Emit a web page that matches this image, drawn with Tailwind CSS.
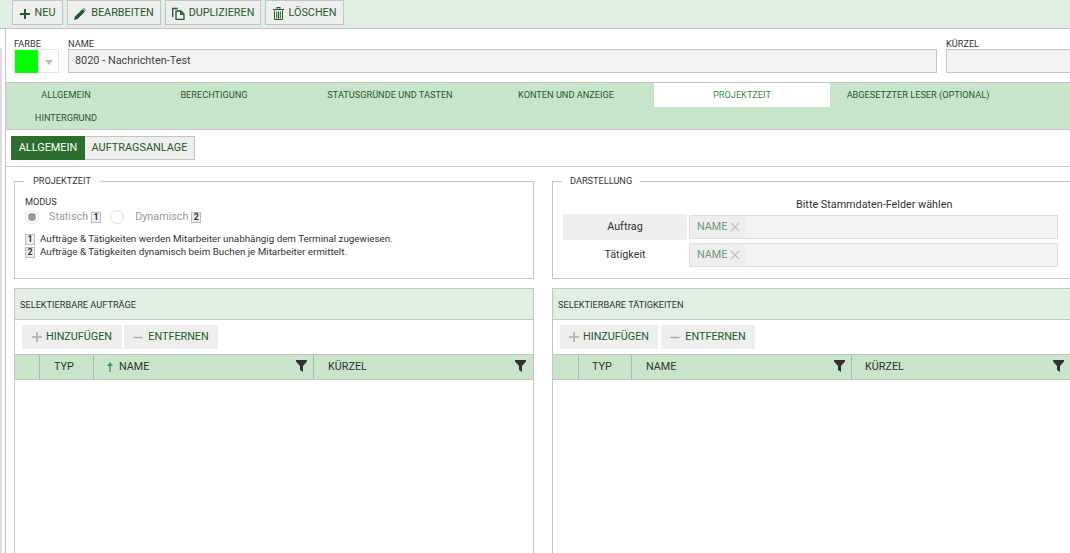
<!DOCTYPE html>
<html lang="en">
<head>
    <meta charset="UTF-8">
    <title>Projektzeit</title>
    <script src="https://cdn.jsdelivr.net/npm/@tailwindcss/browser@4"></script>
</head>
<body class="bg-white h-[553px] w-[1070px] overflow-hidden font-['Roboto',sans-serif] text-[#333] relative">
    <!-- left edge of the neighbouring panel -->
    <div class="absolute left-0 top-[48px] bottom-0 w-[2px] bg-[#ddd]"></div>

    <!-- toolbar -->
    <div class="h-[29px] bg-[#dfefe2] border-b border-[#c4c4c4] flex gap-[4px] pl-3 items-start">
        <button class="h-[25px] w-[51px] pt-[2px] bg-[#eee] border border-[#c4c4c4] flex items-center justify-center gap-[5px] text-[10.800px] text-[#1f5c28]">
            <svg class="w-[10px] h-[10px]" viewBox="0 0 10 10"><path d="M4 0h2v4h4v2H6v4H4V6H0V4h4z" fill="#1f5c28"/></svg>NEU
        </button>
        <button class="h-[25px] w-[94px] pt-[2px] bg-[#eee] border border-[#c4c4c4] flex items-center justify-center gap-[5px] text-[10.800px] text-[#1f5c28]">
            <svg class="w-[12px] h-[12px]" viewBox="0 0 12 12"><path d="M0 12l1-3.500L8.500 1l2.500 2.500L3.500 11zM9.200.4l.6-.4L12 2.200l-.4.600z" fill="#1f5c28"/></svg>BEARBEITEN
        </button>
        <button class="h-[25px] w-[96px] pt-[2px] bg-[#eee] border border-[#c4c4c4] flex items-center justify-center gap-[4px] text-[10.800px] text-[#1f5c28]">
            <svg class="w-[13px] h-[13px]" viewBox="0 0 13 13"><path d="M.7 10V1.500h5M4 12.300V4h5l3 3v5.300zM8.700 4v3.300H12" fill="none" stroke="#1f5c28" stroke-width="1.300"/></svg>DUPLIZIEREN
        </button>
        <button class="h-[25px] w-[79px] pt-[2px] bg-[#eee] border border-[#c4c4c4] flex items-center justify-center gap-[5px] text-[10.800px] text-[#1f5c28]">
            <svg class="w-[11px] h-[13px]" viewBox="0 0 11 13"><path d="M0 2h11v1H0zM4 0h3v1H4zM3.500 0h1v2h-1zM6.500 0h1v2h-1z" fill="#1f5c28"/><path d="M1.500 3.500v9h8v-9M3.700 4.500v7M5.500 4.500v7M7.300 4.500v7" fill="none" stroke="#1f5c28" stroke-width="1"/></svg>LÖSCHEN
        </button>
    </div>

    <div class="ml-[5px] border-l border-[#c4c4c4]">
        <!-- head fields -->
        <div class="h-[54px] flex pl-[8px] pt-[10px] border-b border-[#c4c4c4]">
            <div class="w-[45px] mr-[9px]">
                <div class="text-[9.200px] leading-[10px] h-[10px]">FARBE</div>
                <div class="h-[24px] w-[45px] border border-[#e2e2e2] flex items-center">
                    <div class="w-[23px] h-[23px] bg-[#00ff00]"></div>
                    <svg class="ml-[7px] w-[8px] h-[5px] mt-[2px]" viewBox="0 0 8 5"><path d="M0 0h8L4 5z" fill="#bbb"/></svg>
                </div>
            </div>
            <div class="w-[869px] mr-[9px]">
                <div class="text-[9.200px] leading-[10px] h-[10px]">NAME</div>
                <div class="h-[24px] bg-[#f3f3f3] border border-[#c8c8c8] pl-[6px] text-[10.900px] leading-[22px] text-[#444]">8020 - Nachrichten-Test</div>
            </div>
            <div class="flex-1">
                <div class="text-[9.200px] leading-[10px] h-[10px]">KÜRZEL</div>
                <div class="h-[24px] bg-[#f3f3f3] border border-[#c8c8c8] border-r-0"></div>
            </div>
        </div>

        <!-- tabs -->
        <div class="h-[47px] bg-[#c8e5ca] border-b border-[#c4c4c4] grid grid-cols-[120px_repeat(5,176px)] content-start text-[9.200px] text-[#1f5c28]">
            <div class="h-[24px] flex items-center justify-center">ALLGEMEIN</div>
            <div class="h-[24px] flex items-center justify-center">BERECHTIGUNG</div>
            <div class="h-[24px] flex items-center justify-center">STATUSGRÜNDE UND TASTEN</div>
            <div class="h-[24px] flex items-center justify-center">KONTEN UND ANZEIGE</div>
            <div class="h-[24px] flex items-center justify-center bg-white text-[#3a8a45]">PROJEKTZEIT</div>
            <div class="h-[24px] flex items-center justify-center whitespace-nowrap">ABGESETZTER LESER (OPTIONAL)</div>
            <div class="h-[22px] flex items-center justify-center">HINTERGRUND</div>
        </div>

        <!-- sub tabs -->
        <div class="h-[37px] border-b border-[#c4c4c4] flex pl-[5px] pt-[6px] text-[10.900px]">
            <div class="h-[24px] w-[74px] bg-[#2b6e30] text-white flex items-center justify-center">ALLGEMEIN</div>
            <div class="h-[24px] w-[110px] bg-[#eee] border border-[#c4c4c4] border-l-0 text-[#1f5c28] flex items-center justify-center">AUFTRAGSANLAGE</div>
        </div>

        <div class="grid grid-cols-[520px_1fr] gap-x-[18px] pl-[8px] pt-[14px]">
            <!-- projektzeit fieldset -->
            <fieldset class="border border-[#c4c4c4] h-[104px] pl-[10px] -mt-[6px] min-w-0">
                <legend class="text-[9.200px] leading-[12px] px-[9px] ml-[-1px]">PROJEKTZEIT</legend>
                <div class="text-[9.200px] leading-[11px] mt-[9px]">MODUS</div>
                <div class="flex items-center text-[10.800px] text-[#999] h-[18px] mt-[1px]">
                    <span class="w-[14px] h-[14px] rounded-full border border-[#ddd] flex items-center justify-center"><span class="w-[8px] h-[8px] rounded-full bg-[#999]"></span></span>
                    <span class="ml-[10px]">Statisch</span>
                    <span class="ml-[3px] w-[10px] h-[11px] border border-[#bbb] bg-[#eee] text-[9px] leading-[9px] text-[#333] font-bold text-center">1</span>
                    <span class="ml-[9px] w-[14px] h-[14px] rounded-full border border-[#ddd]"></span>
                    <span class="ml-[11px]">Dynamisch</span>
                    <span class="ml-[3px] w-[10px] h-[11px] border border-[#bbb] bg-[#eee] text-[9px] leading-[9px] text-[#333] font-bold text-center">2</span>
                </div>
                <div class="mt-[7px] flex items-center h-[13px] text-[9.800px] text-[#333]">
                    <span class="w-[10px] h-[11px] border border-[#bbb] bg-[#eee] text-[9px] leading-[9px] font-bold text-center mr-[5px]">1</span>Aufträge &amp; Tätigkeiten werden Mitarbeiter unabhängig dem Terminal zugewiesen.
                </div>
                <div class="flex items-center h-[13px] text-[9.800px] text-[#333]">
                    <span class="w-[10px] h-[11px] border border-[#bbb] bg-[#eee] text-[9px] leading-[9px] font-bold text-center mr-[5px]">2</span>Aufträge &amp; Tätigkeiten dynamisch beim Buchen je Mitarbeiter ermittelt.
                </div>
            </fieldset>

            <!-- darstellung fieldset -->
            <fieldset class="border border-[#c4c4c4] border-r-0 h-[104px] pl-[10px] -mt-[6px] min-w-0">
                <legend class="text-[9.200px] leading-[12px] px-[8px] ml-[-1px]">DARSTELLUNG</legend>
                <div class="text-[10.800px] ml-[233px] mt-[9px] mb-[1px] h-[17px] leading-[17px]">Bitte Stammdaten-Felder wählen</div>
                <div class="flex items-center h-[26px]">
                    <div class="w-[124px] h-[26px] bg-[#eee] text-[10.800px] flex items-center justify-center">Auftrag</div>
                    <div class="ml-[2px] w-[369px] h-[24px] bg-[#f3f3f3] border border-[#ddd] flex items-center">
                        <span class="bg-[#eee] h-full flex items-center pl-[7px] pr-[5px] gap-[3px] text-[10.800px] text-[#6b9a72]">NAME<svg class="w-[10px] h-[10px]" viewBox="0 0 10 10"><path d="M1 1l8 8M9 1L1 9" stroke="#c4c4c4" stroke-width="1.400"/></svg></span>
                    </div>
                </div>
                <div class="flex items-center h-[26px] mt-[2px]">
                    <div class="w-[124px] h-[26px] text-[10.800px] flex items-center justify-center">Tätigkeit</div>
                    <div class="ml-[2px] w-[369px] h-[24px] bg-[#f3f3f3] border border-[#ddd] flex items-center">
                        <span class="bg-[#eee] h-full flex items-center pl-[7px] pr-[5px] gap-[3px] text-[10.800px] text-[#6b9a72]">NAME<svg class="w-[10px] h-[10px]" viewBox="0 0 10 10"><path d="M1 1l8 8M9 1L1 9" stroke="#c4c4c4" stroke-width="1.400"/></svg></span>
                    </div>
                </div>
            </fieldset>

            <!-- auftraege -->
            <section class="border border-[#c4c4c4] border-b-0 mt-[9px] h-[280px]">
                <div class="h-[31px] pt-[2px] bg-[#dfefe2] border-b border-[#c4c4c4] text-[9.200px] flex items-center pl-[5px]">SELEKTIERBARE AUFTRÄGE</div>
                <div class="h-[34px] flex gap-[2px] pl-[7px] pt-[5px]">
                    <button class="h-[24px] w-[100px] bg-[#eee] flex items-center justify-center gap-[4px] text-[10.800px] text-[#1f5c28]"><svg class="w-[10px] h-[10px]" viewBox="0 0 9 9"><path d="M3.800 0h1.400v3.800H9v1.400H5.200V9H3.800V5.200H0V3.800h3.800z" fill="#aaa"/></svg>HINZUFÜGEN</button>
                    <button class="h-[24px] w-[94px] bg-[#eee] flex items-center justify-center gap-[5px] text-[10.800px] text-[#1f5c28]"><svg class="w-[10px] h-[9px]" viewBox="0 0 9 9"><path d="M0 3.800h9v1.400H0z" fill="#aaa"/></svg>ENTFERNEN</button>
                </div>
                <div class="h-[26px] bg-[#c8e5ca] border-y border-[#c4c4c4] flex items-center text-[10.800px]">
                    <div class="w-[25px] h-full border-r border-[#b5b5b5]"></div>
                    <div class="w-[54px] h-full border-r border-[#b5b5b5] flex items-center pl-[14px]">TYP</div>
                    <div class="w-[220px] h-full border-r border-[#b5b5b5] flex items-center pl-[13px] relative">
                        <svg class="w-[6px] h-[10px] mr-[6px]" viewBox="0 0 6 10"><path d="M3 0l3 4H3.700v6H2.300V4H0z" fill="#3a9a4a"/></svg>NAME
                        <svg class="absolute right-[6px] top-[5px] w-[11px] h-[12px]" viewBox="0 0 11 12"><path d="M0 0h11v1.500L7 6v6L4 10V6L0 1.500z" fill="#333"/></svg>
                    </div>
                    <div class="flex-1 h-full flex items-center pl-[14px] relative">KÜRZEL
                        <svg class="absolute right-[7px] top-[5px] w-[11px] h-[12px]" viewBox="0 0 11 12"><path d="M0 0h11v1.500L7 6v6L4 10V6L0 1.500z" fill="#333"/></svg>
                    </div>
                </div>
            </section>

            <!-- taetigkeiten -->
            <section class="border border-[#c4c4c4] border-b-0 border-r-0 mt-[9px] h-[280px]">
                <div class="h-[31px] pt-[2px] bg-[#dfefe2] border-b border-[#c4c4c4] text-[9.200px] flex items-center pl-[5px]">SELEKTIERBARE TÄTIGKEITEN</div>
                <div class="h-[34px] flex gap-[3px] pl-[7px] pt-[5px]">
                    <button class="h-[24px] w-[98px] bg-[#eee] flex items-center justify-center gap-[4px] text-[10.800px] text-[#1f5c28]"><svg class="w-[10px] h-[10px]" viewBox="0 0 9 9"><path d="M3.800 0h1.400v3.800H9v1.400H5.200V9H3.800V5.200H0V3.800h3.800z" fill="#aaa"/></svg>HINZUFÜGEN</button>
                    <button class="h-[24px] w-[94px] bg-[#eee] flex items-center justify-center gap-[5px] text-[10.800px] text-[#1f5c28]"><svg class="w-[10px] h-[9px]" viewBox="0 0 9 9"><path d="M0 3.800h9v1.400H0z" fill="#aaa"/></svg>ENTFERNEN</button>
                </div>
                <div class="h-[26px] bg-[#c8e5ca] border-y border-[#c4c4c4] flex items-center text-[10.800px]">
                    <div class="w-[26px] h-full border-r border-[#b5b5b5]"></div>
                    <div class="w-[53px] h-full border-r border-[#b5b5b5] flex items-center pl-[13px]">TYP</div>
                    <div class="w-[220px] h-full border-r border-[#b5b5b5] flex items-center pl-[14px] relative">NAME
                        <svg class="absolute right-[6px] top-[5px] w-[11px] h-[12px]" viewBox="0 0 11 12"><path d="M0 0h11v1.500L7 6v6L4 10V6L0 1.500z" fill="#333"/></svg>
                    </div>
                    <div class="flex-1 h-full flex items-center pl-[13px] relative">KÜRZEL
                        <svg class="absolute right-[6px] top-[5px] w-[11px] h-[12px]" viewBox="0 0 11 12"><path d="M0 0h11v1.500L7 6v6L4 10V6L0 1.500z" fill="#333"/></svg>
                    </div>
                </div>
            </section>
        </div>
    </div>
</body>
</html>
